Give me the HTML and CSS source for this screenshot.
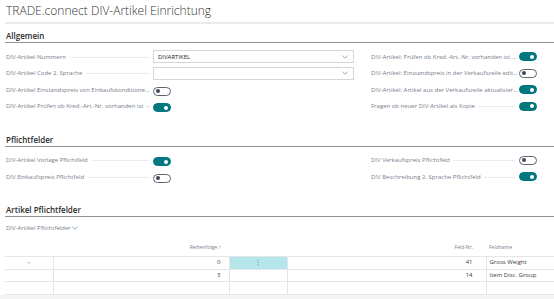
FILE: index.html
```html
<!DOCTYPE html>
<html lang="de">
<head>
  <meta charset="UTF-8">
  <title>TRADE.connect DIV-Artikel Einrichtung</title>
  <link rel="stylesheet" href="styles.css">
</head>
<body>
  <div class="title">TRADE.connect DIV-Artikel Einrichtung</div>

  <!-- Allgemein -->
  <div class="group">
    <div class="group-title">Allgemein</div>
    <div class="fields">
      <div class="col">
        <div class="field">
          <span class="label">DIV-Artikel Nummern</span>
          <div class="select">
            <span class="value">DIVARTIKEL</span>
            <svg class="chevron" width="6" height="4" viewBox="0 0 6 4"><path d="M0.5 0.8 L3 3.2 L5.5 0.8" fill="none" stroke="#8a8f98" stroke-width="0.8"/></svg>
          </div>
        </div>
        <div class="field">
          <span class="label">DIV-Artikel Code 2. Sprache</span>
          <div class="select">
            <span class="value"></span>
            <svg class="chevron" width="6" height="4" viewBox="0 0 6 4"><path d="M0.5 0.8 L3 3.2 L5.5 0.8" fill="none" stroke="#8a8f98" stroke-width="0.8"/></svg>
          </div>
        </div>
        <div class="field">
          <span class="label">DIV-Artikel Einstandspreis von Einkaufskonditione...</span>
          <div class="control"><span class="toggle"></span></div>
        </div>
        <div class="field">
          <span class="label">DIV-Artikel Prüfen ob Kred.-Art.-Nr. vorhanden ist</span>
          <div class="control"><span class="toggle on"></span></div>
        </div>
      </div>
      <div class="col">
        <div class="field">
          <span class="label">DIV-Artikel: Prüfen ob Kred.-Art.-Nr. vorhanden ist ...</span>
          <span class="toggle on"></span>
        </div>
        <div class="field">
          <span class="label">DIV-Artikel: Einstandspreis in der Verkaufszeile edit...</span>
          <span class="toggle"></span>
        </div>
        <div class="field">
          <span class="label">DIV-Artikel: Artikel aus der Verkaufszeile aktualisier...</span>
          <span class="toggle on"></span>
        </div>
        <div class="field">
          <span class="label">Fragen ob neuer DIV-Artikel als Kopie</span>
          <span class="toggle on"></span>
        </div>
      </div>
    </div>
  </div>

  <!-- Pflichtfelder -->
  <div class="group">
    <div class="group-title">Pflichtfelder</div>
    <div class="fields">
      <div class="col">
        <div class="field">
          <span class="label">DIV-Artikel Vorlage Pflichtfeld</span>
          <div class="control"><span class="toggle on"></span></div>
        </div>
        <div class="field">
          <span class="label">DIV Einkaufspreis Pflichtfeld</span>
          <div class="control"><span class="toggle"></span></div>
        </div>
      </div>
      <div class="col">
        <div class="field">
          <span class="label">DIV Verkaufspreis Pflichtfeld</span>
          <span class="toggle"></span>
        </div>
        <div class="field">
          <span class="label">DIV Beschreibung 2. Sprache Pflichtfeld</span>
          <span class="toggle on"></span>
        </div>
      </div>
    </div>
  </div>

  <!-- Artikel Pflichtfelder -->
  <div class="group">
    <div class="group-title">Artikel Pflichtfelder</div>
    <div class="part-title">DIV-Artikel Pflichtfelder<svg class="chevron" width="6" height="4" viewBox="0 0 6 4"><path d="M0.5 0.8 L3 3.2 L5.5 0.8" fill="none" stroke="#6b7280" stroke-width="0.7"/></svg></div>
    <table class="list">
      <colgroup>
        <col class="w-mark">
        <col class="w-order">
        <col class="w-menu">
        <col class="w-no">
        <col>
      </colgroup>
      <thead>
        <tr>
          <th></th>
          <th class="num">Reihenfolge ↑</th>
          <th></th>
          <th class="num wide">Feld-Nr.</th>
          <th>Feldname</th>
        </tr>
      </thead>
      <tbody>
        <tr>
          <td class="c-mark">→</td>
          <td class="num">0</td>
          <td class="c-menu active">⋮</td>
          <td class="num wide">41</td>
          <td>Gross Weight</td>
        </tr>
        <tr>
          <td class="c-mark"></td>
          <td class="num">3</td>
          <td class="c-menu"></td>
          <td class="num wide">14</td>
          <td>Item Disc. Group</td>
        </tr>
        <tr>
          <td class="c-mark"></td>
          <td class="num"></td>
          <td class="c-menu"></td>
          <td class="num wide"></td>
          <td></td>
        </tr>
      </tbody>
    </table>
    <div class="list-end"></div>
  </div>
</body>
</html>
```

FILE: styles.css
```css
body {
  margin: 0;
  font-family: 'Open Sans', sans-serif;
  color: #212121;
  background: #ffffff;
  overflow: hidden;
}

.title {
  margin-left: 5px;
  padding: 3px 1px;
  font-size: 12px;
  font-weight: 300;
  line-height: 16px;
  color: #333;
  border-bottom: 2px solid #ebebeb;
}

.group-title {
  margin-left: 5px;
  padding: 6px 1px 0;
  font-size: 8px;
  font-weight: 600;
  line-height: 12px;
  color: #2b2b2b;
  border-bottom: 1px solid #8e939b;
}

.fields {
  display: grid;
  grid-template-columns: 348px 166px;
  column-gap: 17px;
  padding: 5.5px 0 13px 6px;
}

.field {
  display: flex;
  align-items: center;
  height: 16.5px;
}

.label {
  flex: 1;
  display: flex;
  align-items: center;
  min-width: 0;
  font-size: 6px;
  color: #767e8b;
  white-space: nowrap;
}

.label::after {
  content: "";
  flex: 1;
  margin: 1px 4px 0 4px;
  border-bottom: 1px dotted #d6d9dd;
}

.select {
  width: 201px;
  height: 13px;
  box-sizing: border-box;
  border: 1px solid #d3d6da;
  display: flex;
  align-items: center;
  padding: 0 5px 0 4px;
}

.select .value {
  flex: 1;
  font-size: 6px;
  color: #212121;
}

.control {
  width: 201px;
}

.toggle {
  display: inline-block;
  position: relative;
  width: 18px;
  height: 9px;
  box-sizing: border-box;
  border: 1px solid #5b6270;
  border-radius: 5px;
  background: #fff;
  vertical-align: middle;
}

.toggle::after {
  content: "";
  position: absolute;
  top: 1.5px;
  left: 2px;
  width: 4px;
  height: 4px;
  border-radius: 50%;
  background: #3f4653;
}

.toggle.on {
  background: #00787d;
  border-color: #00787d;
}

.toggle.on::after {
  left: auto;
  right: 2px;
  background: #fff;
}

.part-title {
  padding: 6px 0 0 6px;
  font-size: 6px;
  line-height: 11px;
  color: #767e8b;
}

.part-title .chevron {
  margin-left: 1px;
}

.list {
  margin: 4px 0 0 5px;
  width: 549px;
  border-collapse: collapse;
  table-layout: fixed;
  font-size: 6px;
  white-space: nowrap;
}

.w-mark { width: 48px; }
.w-order { width: 176px; }
.w-menu { width: 58px; }
.w-no { width: 199px; }

.list th {
  height: 18px;
  padding: 0 3px;
  font-weight: 400;
  font-size: 5px;
  color: #767e8b;
  text-align: left;
  vertical-align: middle;
  overflow: hidden;
}

.list td {
  height: 11.7px;
  padding: 0 3px;
  border: 1px solid #e3e5e8;
  line-height: 9px;
  color: #3a3a3a;
  overflow: hidden;
}

.list tr td:first-child {
  border-left: none;
}

.list tr td:last-child {
  border-right: none;
}

.list .num {
  text-align: right;
  padding-right: 8px;
}

.list .num.wide {
  padding-right: 13px;
}

.list .c-mark {
  text-align: center;
  color: #555;
}

.list .c-menu {
  text-align: center;
  color: #6b7280;
}

.list .c-menu.active {
  background: #b4e5ea;
}

.list-end {
  height: 10px;
  background: #f4f4f5;
}
```
